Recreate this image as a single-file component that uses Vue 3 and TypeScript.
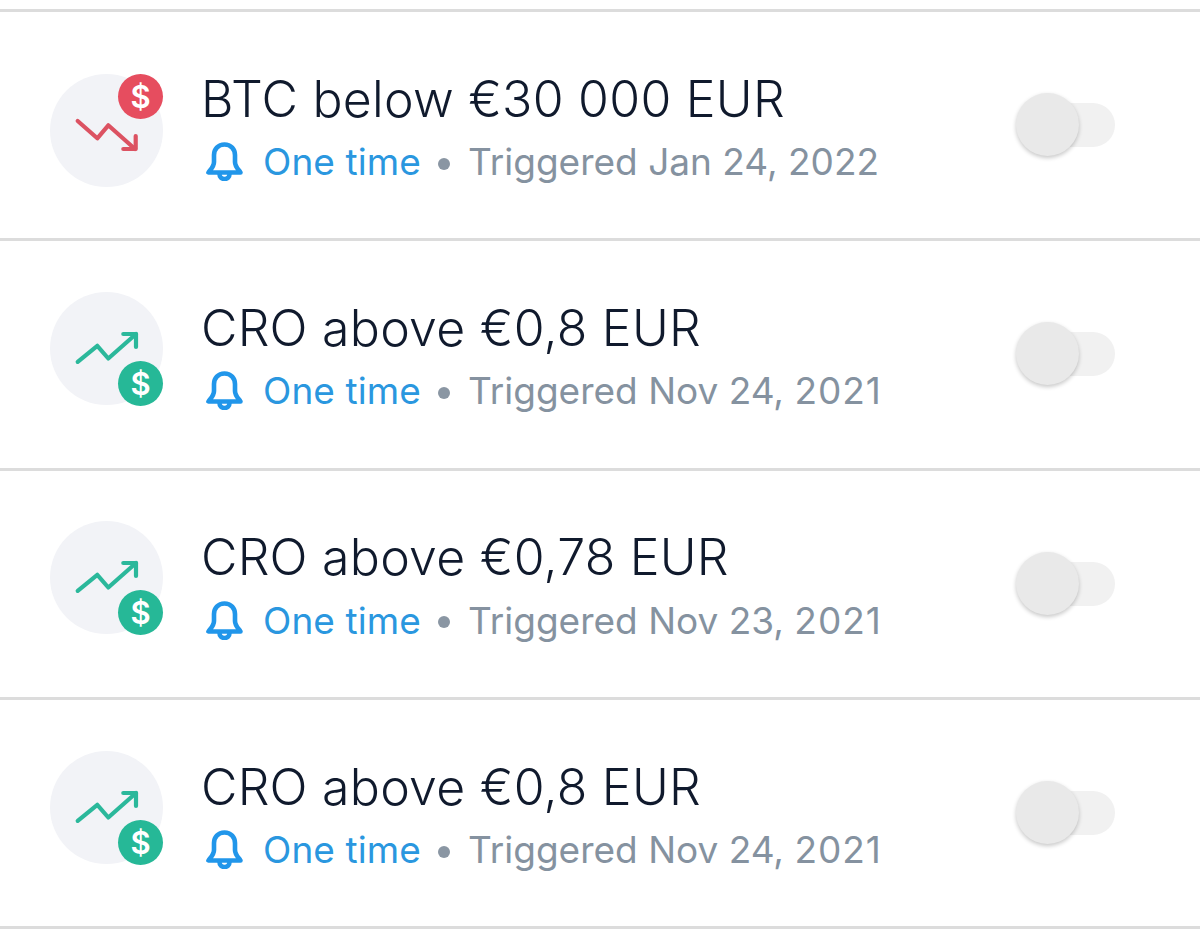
<script setup lang="ts">
interface Alert {
  title: string
  date: string
  year: string
  up: boolean
}
const alerts: Alert[] = [
  { title: 'BTC below €30 000 EUR', date: 'Triggered Jan 24,', year: '2022', up: false },
  { title: 'CRO above €0,8 EUR', date: 'Triggered Nov 24,', year: '2021', up: true },
  { title: 'CRO above €0,78 EUR', date: 'Triggered Nov 23,', year: '2021', up: true },
  { title: 'CRO above €0,8 EUR', date: 'Triggered Nov 24,', year: '2021', up: true },
]
</script>

<template>
  <div class="list">
    <div v-for="(a, i) in alerts" :key="i" class="row">
      <div class="icon" :class="a.up ? 'icon-up' : 'icon-down'">
        <svg class="trend" viewBox="0 0 113 113" width="113" height="113" fill="none" stroke-width="4.2" stroke-linecap="round" stroke-linejoin="round">
          <g v-if="a.up" stroke="#2bb89b">
            <path d="M27.7 69.8 47.3 53.8 58.3 66.5 86 42" />
            <path d="M73.3 42H86V55" />
          </g>
          <g v-else stroke="#dc5262">
            <path d="M27.7 47 47.3 64.3 58.3 51.3 85 75" />
            <path d="M85.7 62V75H73.3" />
          </g>
        </svg>
        <span class="badge" :class="a.up ? 'badge-up' : 'badge-down'">$</span>
      </div>
      <div class="text">
        <div class="title">{{ a.title }}</div>
        <div class="sub">
          <svg class="bell" viewBox="0 0 37 39" width="37" height="39" fill="none" stroke="#2196ea" stroke-width="4.6" stroke-linecap="round" stroke-linejoin="round">
            <path d="M18.5 2.500C12 2.500 8 7.500 8 13V20C8 24.500 5 27 2.500 30.500H34.500C32 27 29 24.500 29 20V13C29 7.500 25 2.500 18.500 2.500Z" />
            <path d="M13.500 32C13.500 35 15.500 37 18.500 37S23.500 35 23.500 32" />
          </svg>
          <span class="kind">One time</span>
          <span class="dot"></span>
          <span class="date">{{ a.date }} <span :class="{ 'year-wide': a.up }">{{ a.year }}</span></span>
        </div>
      </div>
      <div class="toggle">
        <span class="knob"></span>
      </div>
    </div>
  </div>
</template>

<style>
html, body {
  margin: 0;
  background: #fff;
}
</style>

<style scoped>
.list {
  width: 1200px;
  height: 946px;
  box-sizing: border-box;
  padding-top: 9px;
  overflow: hidden;
  background: #fff;
  font-family: Inter, "Liberation Sans", sans-serif;
}
.row {
  display: flex;
  align-items: center;
  box-sizing: border-box;
  height: 229.3px;
  padding: 0 85px 0 50px;
  border-bottom: 3px solid #dcdcdc;
}
.row:first-child {
  height: 232.3px;
  border-top: 3px solid #dcdcdc;
}
.icon {
  position: relative;
  flex: none;
  width: 113px;
  height: 113px;
  border-radius: 50%;
  background: #f2f3f7;
}
.icon-down {
  margin-top: 10px;
}
.icon-up {
  margin-bottom: 12px;
}
.trend {
  display: block;
}
.badge {
  position: absolute;
  right: 0;
  width: 45px;
  height: 45px;
  border-radius: 50%;
  color: #fff;
  font-size: 31px;
  font-weight: 600;
  line-height: 45px;
  text-align: center;
}
.badge-down {
  top: 0;
  background: #e64d5f;
}
.badge-up {
  bottom: -1px;
  background: #26b897;
}
.text {
  flex: 1;
  margin-top: 2px;
  margin-left: 38px;
}
.title {
  color: #101a2d;
  font-size: 50px;
  font-weight: 350;
  letter-spacing: 0.25px;
  line-height: 56px;
  white-space: nowrap;
}
.sub {
  display: flex;
  align-items: center;
  margin-top: 15px;
  height: 40px;
  font-size: 37px;
  white-space: nowrap;
}
.bell {
  flex: none;
  margin-left: 5px;
}
.kind {
  margin-left: 20px;
  color: #2a97df;
  letter-spacing: 0.1px;
}
.dot {
  width: 12px;
  height: 12px;
  margin: 4px 17.500px 0;
  border-radius: 50%;
  background: #8a96a3;
}
.date {
  color: #8592a0;
}
.year-wide {
  letter-spacing: 1px;
}
.toggle {
  position: relative;
  flex: none;
  width: 90px;
  height: 44px;
  border-radius: 22px;
  background: #f1f1f1;
}
.knob {
  position: absolute;
  left: -9px;
  top: -10px;
  width: 63px;
  height: 63px;
  border-radius: 50%;
  background: #e9e9e9;
  box-shadow: 0 2px 4px rgba(0, 0, 0, 0.22);
}
</style>
